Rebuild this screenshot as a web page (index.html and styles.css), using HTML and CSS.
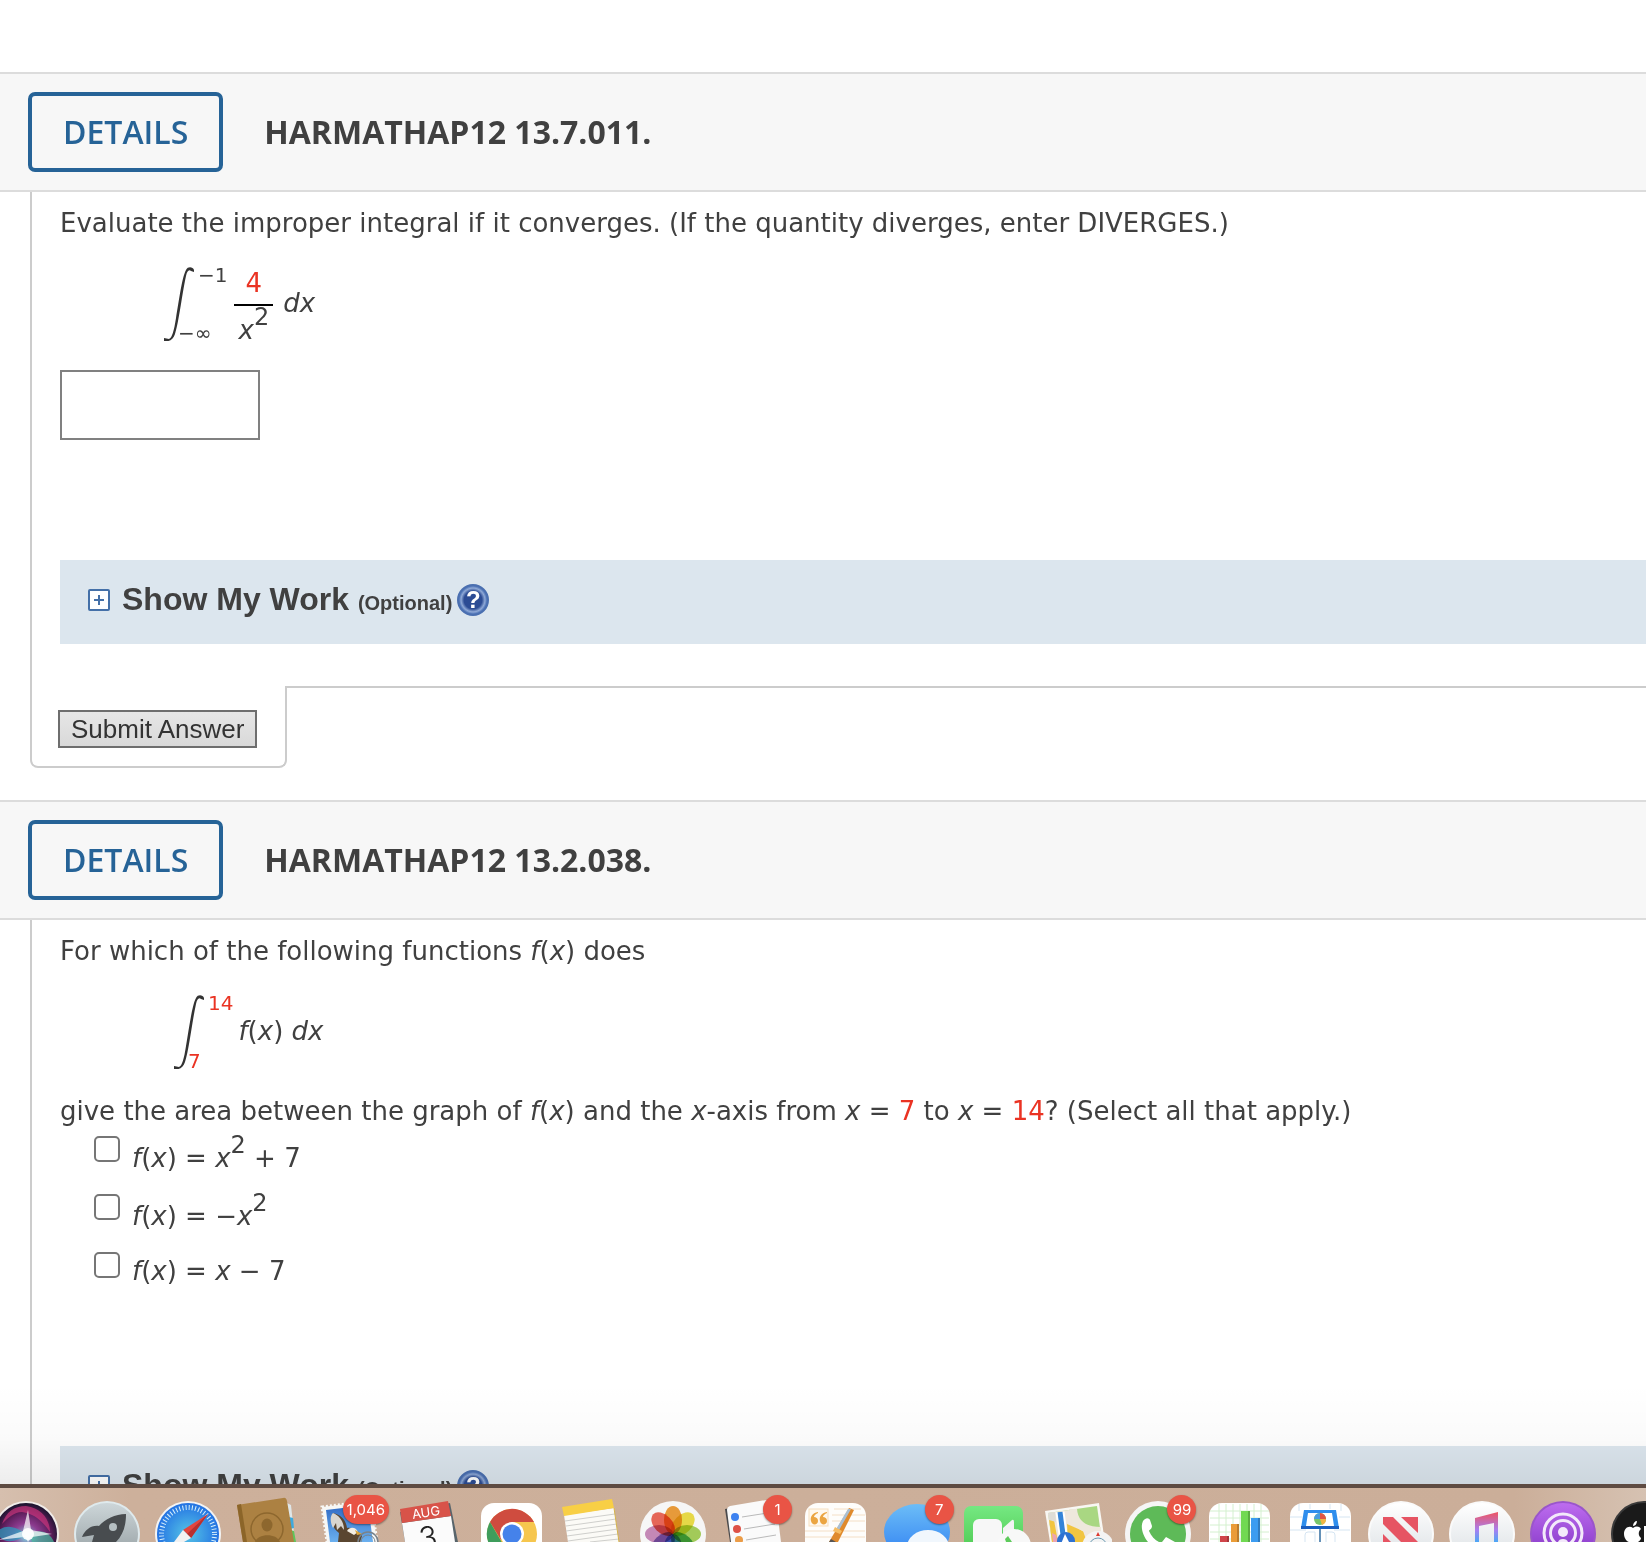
FILE: index.html
```html
<!DOCTYPE html>
<html lang="en">
<head>
    <meta charset="UTF-8">
    <meta name="viewport" content="width=device-width, initial-scale=1.0">
    <title>Homework</title>
    <link rel="stylesheet" href="styles.css">
</head>
<body>
    <main class="page">
        <section class="question">
            <div class="question-header">
                <button class="details-btn" type="button">DETAILS</button>
                <h2>HARMATHAP12 13.7.011.</h2>
            </div>
            <div class="problem">
                <label for="answer">Evaluate the improper integral if it converges. (If the quantity diverges, enter DIVERGES.)</label>
                <div class="equation">
                    <svg class="integral" viewBox="0 0 30 74"><path d="M30 3C29 0 24-1 22 3C18 10 15 34 12 51C10 64 8 71 5 72L0 71V74C5 75 9 73 11 67C15 55 18 27 22 9C23 4 25 2 27 4L30 5Z"/></svg>
                    <div class="limits">
                        <span>−1</span>
                        <span class="lower">−∞</span>
                    </div>
                    <div class="fraction">
                        <span class="red">4</span>
                        <span class="denominator"><i>x</i><sup>2</sup></span>
                    </div>
                    <i class="integrand">dx</i>
                </div>
                <input type="text" id="answer" class="answer">
                <div class="work">
                    <button class="expand-btn" type="button" aria-label="Expand">
                        <svg viewBox="0 0 22 22"><rect x="1" y="1" width="20" height="20" rx="1"/><path d="M6 11H16M11 6V16"/></svg>
                    </button>
                    <h3>Show My Work <small>(Optional)</small></h3>
                    <button class="help-btn" type="button" aria-label="Help"><span>?</span></button>
                </div>
            </div>
            <div class="submit-row">
                <div class="submit-tab">
                    <button class="submit-btn" type="submit">Submit Answer</button>
                </div>
            </div>
        </section>

        <section class="question">
            <div class="question-header">
                <button class="details-btn" type="button">DETAILS</button>
                <h2>HARMATHAP12 13.2.038.</h2>
            </div>
            <div class="problem">
                <p>For which of the following functions <i>f</i>(<i>x</i>) does</p>
                <div class="equation equation-wide">
                    <svg class="integral" viewBox="0 0 30 74"><path d="M30 3C29 0 24-1 22 3C18 10 15 34 12 51C10 64 8 71 5 72L0 71V74C5 75 9 73 11 67C15 55 18 27 22 9C23 4 25 2 27 4L30 5Z"/></svg>
                    <div class="limits red">
                        <span>14</span>
                        <span class="lower">7</span>
                    </div>
                    <span class="integrand"><i>f</i>(<i>x</i>) <i>dx</i></span>
                </div>
                <p>give the area between the graph of <i>f</i>(<i>x</i>) and the <i>x</i>-axis from <i>x</i> = <span class="red">7</span> to <i>x</i> = <span class="red">14</span>? (Select all that apply.)</p>
                <div class="choices">
                    <div class="choice">
                        <input type="checkbox" id="choice1">
                        <label for="choice1"><i>f</i>(<i>x</i>) = <i>x</i><sup>2</sup> + 7</label>
                    </div>
                    <div class="choice">
                        <input type="checkbox" id="choice2">
                        <label for="choice2"><i>f</i>(<i>x</i>) = −<i>x</i><sup>2</sup></label>
                    </div>
                    <div class="choice">
                        <input type="checkbox" id="choice3">
                        <label for="choice3"><i>f</i>(<i>x</i>) = <i>x</i> − 7</label>
                    </div>
                </div>
                <div class="work">
                    <button class="expand-btn" type="button" aria-label="Expand">
                        <svg viewBox="0 0 22 22"><rect x="1" y="1" width="20" height="20" rx="1"/><path d="M6 11H16M11 6V16"/></svg>
                    </button>
                    <h3>Show My Work <small>(Optional)</small></h3>
                    <button class="help-btn" type="button" aria-label="Help"><span>?</span></button>
                </div>
            </div>
        </section>
    </main>

    <footer class="dock">
        <ul>
            <!-- Siri -->
            <li><svg viewBox="0 0 68 54">
                <defs>
                    <radialGradient id="siri" cx=".5" cy=".55" r=".55"><stop offset="0" stop-color="#7fd6e0"/><stop offset=".4" stop-color="#8c3b8f"/><stop offset=".75" stop-color="#5a1c58"/><stop offset="1" stop-color="#17142c"/></radialGradient>
                </defs>
                <circle cx="34" cy="46" r="33" fill="#f1ece9"/><circle cx="34" cy="46" r="31" fill="url(#siri)"/>
                <path d="M34 18C50 20 58 32 58 44C50 32 42 26 30 24C22 24 16 30 10 36C14 24 22 18 34 18Z" fill="#d2377f" opacity=".65"/>
                <path d="M5 44C14 34 26 40 34 46C26 54 10 58 5 44Z" fill="#2b9fc0" opacity=".7"/>
                <path d="M37 46C48 40 58 44 62 54H40Z" fill="#3fc7a0" opacity=".65"/>
                <path d="M36 22L39 42L60 46L40 49L36 54L33 49L6 52L31 43Z" fill="#fff" opacity=".7"/>
                <circle cx="36" cy="46" r="6" fill="#fff" opacity=".9"/>
            </svg></li>
            <!-- Launchpad -->
            <li><svg viewBox="0 0 68 54">
                <defs><linearGradient id="silver" x2="0" y2="1"><stop offset="0" stop-color="#cdd6d9"/><stop offset="1" stop-color="#8f999c"/></linearGradient></defs>
                <circle cx="34" cy="46" r="33" fill="#dfeaed"/><circle cx="34" cy="46" r="31" fill="url(#silver)"/>
                <path d="M53 26C42 26 32 31 26 38C18 37 12 42 9 49L21 47L19 54H43C50 47 53 38 53 26Z" fill="#484c4f"/>
                <circle cx="40" cy="39" r="4" fill="#b5bfc2"/>
            </svg></li>
            <!-- Safari -->
            <li><svg viewBox="0 0 68 54">
                <defs><radialGradient id="compass"><stop offset="0" stop-color="#56c5e6"/><stop offset="1" stop-color="#2473e3"/></radialGradient></defs>
                <circle cx="34" cy="46" r="33" fill="#f4f4f4"/><circle cx="34" cy="46" r="31" fill="url(#compass)"/>
                <circle cx="34" cy="46" r="26.500" fill="none" stroke="#d8f0fc" stroke-width="5" stroke-dasharray="1 2.200"/>
                <path d="M54 26L29 42L37 50Z" fill="#e2453f"/><path d="M54 26L33 46L37 50Z" fill="#b8302f"/>
                <path d="M29 42L37 50L30 54H20Z" fill="#f2f2f2"/>
            </svg></li>
            <!-- Contacts -->
            <li><svg viewBox="0 0 68 54">
                <path d="M50 14L56 17L60 54H52Z" fill="#dfe6e8"/><path d="M54 29L58 30L59 40L55 41Z" fill="#3fa9dc"/><path d="M55 42L59 43L61 54H56Z" fill="#5fc45b"/>
                <path d="M2 17L48 10Q51 9 52 13L59 54H8Z" fill="#ac8142"/><path d="M2 17L6 16L12 54H8Z" fill="#8c6529"/>
                <circle cx="32" cy="41" r="16" fill="none" stroke="#8d672e" stroke-width="1.500"/>
                <ellipse cx="32" cy="37" rx="5.500" ry="6.500" fill="#8d672e"/><path d="M20 54C22 46 41 44 45 54Z" fill="#8d672e"/>
            </svg></li>
            <!-- Mail -->
            <li><svg viewBox="0 0 68 54">
                <defs><linearGradient id="sky" x2="0" y2="1"><stop offset="0" stop-color="#2e69c4"/><stop offset="1" stop-color="#6bb0ef"/></linearGradient></defs>
                <path d="M6 19L55 13L61 54H11Z" fill="#f7f7f5" stroke="#f7f7f5" stroke-width="3" stroke-dasharray="2 2"/>
                <path d="M10 22L52 17L57 54H14Z" fill="url(#sky)"/>
                <path d="M17 25C14 31 16 40 23 45L22 54H44L46 48C42 42 36 39 31 40C30 32 25 27 17 25Z" fill="#5a4630"/>
                <path d="M17 25C13 29 15 36 17 40L20 35L21 42L25 38L28 42C28 34 24 28 17 25Z" fill="#d8d5cf"/>
                <path d="M31 43C34 38 40 39 42 44L38 47Z" fill="#f4efe4"/><path d="M39 42L46 46L41 47Z" fill="#dca63c"/>
                <circle cx="52" cy="54" r="10" fill="none" stroke="#79828a" stroke-width="1.500"/><circle cx="52" cy="54" r="7" fill="none" stroke="#79828a"/>
            </svg><span class="badge">1,046</span></li>
            <!-- Calendar -->
            <li><svg viewBox="0 0 68 54">
                <path d="M4 24L54 15L62 54H9Z" fill="#58646b"/>
                <path d="M6 35L55 28L59 54H9Z" fill="#fbfbfb"/><path d="M4 21L52 13L55 28L6 35Z" fill="#d85349"/>
                <text class="month" x="16" y="29" transform="rotate(-8 30 25)">AUG</text>
                <text class="day" x="23" y="60" transform="rotate(-8 32 50)">3</text>
            </svg></li>
            <!-- Chrome -->
            <li><svg viewBox="0 0 68 54">
                <rect x="4" y="15" width="61" height="60" rx="13" fill="#fff"/>
                <circle cx="35" cy="46" r="25" fill="#f6c64e"/>
                <path d="M13 34A25 25 0 0 1 57 34H35L24 52Z" fill="#cf4c3f"/><path d="M13 34A25 25 0 0 0 13 58H27Z" fill="#3f9d5c"/>
                <circle cx="35" cy="46" r="12" fill="#fff"/><circle cx="35" cy="46" r="9.500" fill="#4582ea"/>
            </svg></li>
            <!-- Notes -->
            <li><svg viewBox="0 0 68 54">
                <path d="M6 27L56 20L61 54H10Z" fill="#fbfaf6"/><path d="M4 19L54 11L56 20L6 28Z" fill="#f8cf45"/>
                <path d="M7 33L57 26M8 38L58 31M8 43L59 36M9 48L60 41M10 53L60 46M32 54L61 51" stroke="#cfcfcc" fill="none"/>
                <path d="M56 20L61 54" stroke="#d6b44a"/>
            </svg></li>
            <!-- Photos -->
            <li><svg viewBox="0 0 68 54">
                <circle cx="34" cy="46" r="33" fill="#f6f6f6"/>
                <g class="petals">
                    <ellipse cx="34" cy="32" rx="9" ry="14" fill="#f0a03c"/>
                    <ellipse cx="34" cy="32" rx="9" ry="14" fill="#efe04a" transform="rotate(45 34 46)"/>
                    <ellipse cx="34" cy="32" rx="9" ry="14" fill="#a8d25c" transform="rotate(90 34 46)"/>
                    <ellipse cx="34" cy="32" rx="9" ry="14" fill="#5cb98c" transform="rotate(135 34 46)"/>
                    <ellipse cx="34" cy="32" rx="9" ry="14" fill="#6c9ddc" transform="rotate(180 34 46)"/>
                    <ellipse cx="34" cy="32" rx="9" ry="14" fill="#8f83cf" transform="rotate(225 34 46)"/>
                    <ellipse cx="34" cy="32" rx="9" ry="14" fill="#cb8dbd" transform="rotate(270 34 46)"/>
                    <ellipse cx="34" cy="32" rx="9" ry="14" fill="#ee6a5b" transform="rotate(315 34 46)"/>
                </g>
            </svg></li>
            <!-- Reminders -->
            <li><svg viewBox="0 0 68 54">
                <path d="M5 21L10 54H60L56 12Z" fill="#4a4a4c"/>
                <path d="M7 22Q7 19 10 18L52 11Q55 11 56 14L61 54H11Z" fill="#fafafa"/>
                <circle cx="15" cy="29" r="4" fill="#3d82f0"/><circle cx="17" cy="41" r="4" fill="#dd5146"/><circle cx="19" cy="52" r="4" fill="#eb9c47"/>
                <path d="M22 29L54 24M24 41L55 36M26 52L56 47" stroke="#b9b9b9" fill="none"/>
            </svg><span class="badge badge-round">1</span></li>
            <!-- Pages -->
            <li><svg viewBox="0 0 68 54">
                <rect x="4" y="15" width="61" height="60" rx="13" fill="#fefdfb"/>
                <path d="M33 21H60M31 27H64M31 33H64M4 43H64M4 49H64" stroke="#f4dfc6" fill="none"/>
                <rect x="8" y="21" width="19" height="17" fill="#fff8ee" stroke="#f6dfc0"/>
                <path d="M17 24C11 25 9 29 10 33C11 38 17 37 17 33C17 30 15 29 13 29C13 27 15 26 17 25ZM26 24C20 25 18 29 19 33C20 38 26 37 26 33C26 30 24 29 22 29C22 27 24 26 26 25Z" fill="#eba542"/>
                <path d="M48 20L53 22L37 54H28Z" fill="#e08a2c"/><path d="M47 21L50 21L37 44L34 43Z" fill="#a9bfd3"/><path d="M34 39L41 43L39 46L32 43Z" fill="#f6bd63"/><path d="M30 51L35 54H28Z" fill="#555"/>
            </svg></li>
            <!-- Messages -->
            <li><svg viewBox="0 0 68 54">
                <defs><linearGradient id="bubble" x2="0" y2="1"><stop offset="0" stop-color="#6cbdf7"/><stop offset="1" stop-color="#2f7ff2"/></linearGradient></defs>
                <ellipse cx="35" cy="44" rx="33" ry="28" fill="url(#bubble)"/><ellipse cx="46" cy="59" rx="21" ry="17" fill="#f1f7fd"/>
            </svg><span class="badge badge-round">7</span></li>
            <!-- FaceTime -->
            <li><svg viewBox="0 0 68 54">
                <defs><linearGradient id="green" x2="0" y2="1"><stop offset="0" stop-color="#75e882"/><stop offset="1" stop-color="#43c142"/></linearGradient></defs>
                <rect x="1" y="18" width="59" height="60" rx="7" fill="url(#green)"/>
                <rect x="10" y="31" width="29" height="32" rx="6" fill="#f7f7f7"/><path d="M40 40L49 32Q51 31 51 34V54H40Z" fill="#f3f3f3"/>
                <circle cx="51" cy="58" r="17" fill="#f8f8f8"/><path d="M42 51L45 48L49 54H43Z" fill="#5ecb5c"/>
            </svg></li>
            <!-- Maps -->
            <li><svg viewBox="0 0 68 54">
                <path d="M1 23L55 15L61 54H6Z" fill="#f8f7f3"/>
                <path d="M4 25L53 18L58 54H8Z" fill="#a9d782"/><path d="M4 25L25 22L50 47L49 54H8Z" fill="#efe7dd"/>
                <path d="M5 31L10 32L14 54H8Z" fill="#f1c541"/><path d="M23 36L39 43L43 54H24Z" fill="#f1c541"/><path d="M4 25L11 24L12 34L5 32Z" fill="#dedcd6"/><path d="M8 45L12 47L14 54H9Z" fill="#eda4b0"/>
                <path d="M29 21C30 36 40 43 57 43" stroke="#eee8dc" stroke-width="8" fill="none"/><path d="M16 24L20 54" stroke="#fff" stroke-width="9"/><path d="M16 24L20 54" stroke="#3584d8" stroke-width="5"/>
                <circle cx="22" cy="53" r="9" fill="#2e72d2"/><path d="M21 46L26 56L21 54L17 56Z" fill="#fff"/>
                <circle cx="54" cy="59" r="16" fill="#f4f4f4"/><circle cx="54" cy="59" r="9" fill="none" stroke="#6a9ab3"/><path d="M54 44L56 48H52Z" fill="#dd3b30"/>
            </svg></li>
            <!-- WhatsApp -->
            <li><svg viewBox="0 0 68 54">
                <circle cx="34" cy="46" r="33" fill="#f5f5f5"/><circle cx="34" cy="46" r="28" fill="#5eba58"/>
                <path d="M19 33C22 29 25 30 26 32L28 38C28 41 25 42 25 43C27 48 31 52 35 54H24C19 48 16 39 19 33Z" fill="#fff"/><path d="M38 54L42 49L51 54Z" fill="#fff"/>
            </svg><span class="badge badge-round">99</span></li>
            <!-- Numbers -->
            <li><svg viewBox="0 0 68 54">
                <rect x="4" y="15" width="61" height="60" rx="13" fill="#fff"/>
                <path d="M5 23H64M5 30H64M5 37H64M5 44H64M5 51H64M14 16V54M21 16V54M28 16V54M35 16V54M42 16V54M49 16V54M56 16V54" stroke="#d4f0cf" fill="none"/>
                <rect x="15" y="48" width="9" height="6" fill="#d0454a"/><rect x="26" y="36" width="8" height="18" fill="#ea9c37"/><rect x="36" y="23" width="9" height="31" fill="#71d952"/><rect x="46" y="30" width="9" height="24" fill="#3c9cf0"/>
                <path d="M23 48V54M33 36V54M44 23V54M54 30V54" stroke="#0003" stroke-width="2"/>
            </svg></li>
            <!-- Keynote -->
            <li><svg viewBox="0 0 68 54">
                <rect x="4" y="15" width="61" height="60" rx="13" fill="#fff"/>
                <path d="M4 29H16M53 29H64M13 16V23M24 16V21M44 16V21M55 16V23M4 42H20M48 42H64M19 54V47Q19 44 22 44H29V54M40 54V44H46Q49 44 49 47V54" stroke="#d5e5f2" fill="none"/>
                <path d="M18 22H50L53 40H15Z" fill="#2f8eed"/><path d="M15 38H53V41H15Z" fill="#1b5fc0"/><path d="M22 25H46L48 38H20Z" fill="#fff"/>
                <circle cx="34" cy="31" r="6" fill="#79c66b"/><path d="M34 31V25A6 6 0 0 1 40 31Z" fill="#e25545"/><path d="M34 31H40A6 6 0 0 1 36 37Z" fill="#f1b545"/><path d="M34 31V25A6 6 0 0 0 28 31Z" fill="#4a9ee0"/>
                <path d="M34 41V54" stroke="#6491b8" stroke-width="2"/>
            </svg></li>
            <!-- News -->
            <li><svg viewBox="0 0 68 54">
                <defs><linearGradient id="white" x2="0" y2="1"><stop offset="0" stop-color="#fff"/><stop offset="1" stop-color="#d9dee2"/></linearGradient></defs>
                <circle cx="34" cy="46" r="33" fill="#fafafa"/><circle cx="34" cy="46" r="31" fill="url(#white)"/>
                <path d="M16 29H26L51 54H34L16 36ZM34 29H51V45ZM16 46L24 54H16Z" fill="#e65463"/>
            </svg></li>
            <!-- Music -->
            <li><svg viewBox="0 0 68 54">
                <defs><linearGradient id="note" x2="0" y2="1"><stop offset="0" stop-color="#ef5562"/><stop offset=".6" stop-color="#a77ff0"/><stop offset="1" stop-color="#4aa7f5"/></linearGradient></defs>
                <circle cx="34" cy="46" r="33" fill="#fafafa"/><circle cx="34" cy="46" r="31" fill="url(#white)"/>
                <path d="M27 30L50 24V54H46V35L31 38V54H27Z" fill="url(#note)"/>
            </svg></li>
            <!-- Podcasts -->
            <li><svg viewBox="0 0 68 54">
                <defs><linearGradient id="purple" x2="0" y2="1"><stop offset="0" stop-color="#bd6cef"/><stop offset="1" stop-color="#7c2fc0"/></linearGradient></defs>
                <circle cx="34" cy="46" r="33" fill="#9a55cb"/><circle cx="34" cy="46" r="31" fill="url(#purple)"/>
                <circle cx="34" cy="45" r="19" fill="none" stroke="#f3e9fa" stroke-width="3"/><circle cx="34" cy="45" r="12.500" fill="none" stroke="#f3e9fa" stroke-width="3"/>
                <circle cx="34" cy="44" r="5" fill="#f3e9fa"/><path d="M29 54Q30 51 34 51T39 54Z" fill="#f3e9fa"/>
            </svg></li>
            <!-- TV -->
            <li><svg viewBox="0 0 68 54">
                <circle cx="34" cy="46" r="33" fill="#3a3a3a"/><circle cx="34" cy="46" r="31" fill="#1a1a1a"/>
                <path d="M23 40C19 37 14 40 14 46C14 50 17 54 19 54H28C30 53 31 51 31 50C28 48 28 43 31 41C29 38 26 38 23 40ZM23 38C23 35 25 33 27 33C27 36 25 38 23 38Z" fill="#fff"/>
                <path d="M38 38V42H41V45H38V54H34V38Z" fill="#fff"/>
            </svg></li>
        </ul>
    </footer>
</body>
</html>
```

FILE: styles.css
```css
* {
    box-sizing: border-box;
}

body {
    font-family: Verdana, "DejaVu Sans", sans-serif;
    font-size: 26px;
    line-height: 32px;
    color: #404040;
    margin: 0;
    background-color: #fff;
    height: 100vh;
    display: flex;
    flex-direction: column;
    overflow: hidden;
}

p, h2, h3 {
    margin: 0;
}

.red {
    color: #ea3323;
}

.page {
    flex: 1;
    min-height: 0;
    padding-top: 72px;
    overflow: hidden;
    position: relative;
}

/* shadow cast by the dock */
.page::after {
    content: "";
    position: absolute;
    left: 0;
    right: 0;
    bottom: 0;
    height: 100px;
    background: linear-gradient(rgba(0, 0, 0, 0), rgba(0, 0, 0, 0.02) 55%, rgba(0, 0, 0, 0.07));
    pointer-events: none;
}

.question {
    margin-bottom: 32px;
}

.question-header {
    display: flex;
    align-items: center;
    gap: 41px;
    padding: 18px 28px;
    background-color: #f7f7f7;
    border-top: 2px solid #dcdcdc;
    border-bottom: 2px solid #dcdcdc;
    font-family: "Open Sans", sans-serif;
}

.question-header h2 {
    font-size: 32px;
    font-weight: 700;
}

.details-btn {
    font-family: inherit;
    font-size: 32px;
    font-weight: 600;
    line-height: 40px;
    color: #266397;
    background-color: transparent;
    border: 4px solid #266397;
    border-radius: 7px;
    padding: 16px 31px;
    cursor: pointer;
}

.problem {
    margin-left: 30px;
    padding: 15px 0 42px 28px;
    border-left: 2px solid #ccc;
}

.problem > label {
    display: block;
}

.equation {
    display: flex;
    align-items: flex-start;
    margin: 28px 0 24px 104px;
}

.equation-wide {
    margin-left: 114px;
    margin-bottom: 26px;
}

.integral {
    width: 30px;
    height: 74px;
    fill: #333;
}

.limits {
    height: 78px;
    display: flex;
    flex-direction: column;
    justify-content: space-between;
    font-size: 20px;
    line-height: 20px;
    margin: -2px 0;
    padding: 0 5px 0 4px;
}

.lower {
    margin-left: -20px;
}

.fraction {
    margin: 0 10px 0 2px;
    text-align: center;
}

.fraction span {
    display: block;
    padding-bottom: 5px;
}

.fraction .denominator {
    border-top: 2px solid #000;
    padding: 5px 4px 0;
}

.integrand {
    margin-top: 20px;
}

sup {
    font-size: 24px;
    line-height: 12px;
    vertical-align: 14px;
}

.answer {
    display: block;
    width: 200px;
    height: 70px;
    border: 2px solid #808080;
    padding: 4px 8px;
    font: inherit;
}

.work {
    display: flex;
    align-items: center;
    height: 84px;
    margin-top: 120px;
    padding: 0 28px 5px;
    background-color: #dce6ee;
    font-family: Arial, "Liberation Sans", sans-serif;
}

.work h3 {
    font-size: 32px;
    margin: 0 5px 0 12px;
    padding-top: 2px;
}

.work small {
    font-size: 20px;
}

.expand-btn {
    display: flex;
    padding: 0;
    border: none;
    background: none;
    cursor: pointer;
}

.expand-btn svg {
    width: 22px;
    height: 22px;
    fill: #fff;
    stroke: #4470a8;
    stroke-width: 2;
}

.help-btn {
    width: 32px;
    height: 32px;
    padding: 0;
    border: 2px solid #4a6fb0;
    border-radius: 50%;
    background: radial-gradient(#2c4c94 45%, #8fa9d6 60%, #5176b8 70%);
    color: #fff;
    font: bold 24px/28px Arial, "Liberation Sans", sans-serif;
    cursor: pointer;
}

.submit-row {
    display: flex;
    margin-left: 30px;
}

.submit-row::after {
    content: "";
    flex: 1;
    border-top: 2px solid #ccc;
}

.submit-tab {
    padding: 24px 28px 18px 26px;
    border: 2px solid #ccc;
    border-top: none;
    border-radius: 0 0 8px 8px;
}

.submit-btn {
    display: block;
    height: 38px;
    padding: 0 11px;
    font: 26px/32px Arial, "Liberation Sans", sans-serif;
    color: #333;
    background: linear-gradient(#e6e6e6, #d9d9d9);
    border: 2px solid #6e6e6e;
    cursor: pointer;
}

.choices {
    padding: 0 0 25px 34px;
}

.choice {
    display: flex;
    align-items: flex-start;
    gap: 12px;
    height: 58px;
}

.choice input {
    appearance: none;
    width: 26px;
    height: 26px;
    margin: 9px 0 0;
    border: 2px solid #767676;
    border-radius: 5px;
    background-color: #fff;
}

.choice label {
    margin-top: 12px;
}

.dock {
    height: 58px;
    border-top: 4px solid #5e4b42;
    background: linear-gradient(90deg, #d6bfae, #cdb09b 8%, #cbae99 92%, #d6c2b2);
    overflow: hidden;
}

.dock ul {
    display: flex;
    justify-content: space-between;
    list-style: none;
    margin: 0 -32px 0 -8px;
    padding: 0;
}

.dock li {
    position: relative;
}

.dock svg {
    display: block;
    width: 68px;
    height: 54px;
}

.petals ellipse {
    mix-blend-mode: multiply;
}

.month {
    font: 13px Inter, sans-serif;
    fill: #fff;
}

.day {
    font: 300 30px Inter, sans-serif;
    fill: #222;
}

.badge {
    position: absolute;
    top: 7px;
    left: 27px;
    min-width: 29px;
    height: 29px;
    padding: 0 4px;
    border-radius: 15px;
    background-color: #e95445;
    box-shadow: 0 1px 2px rgba(0, 0, 0, 0.4);
    color: #fff;
    font: 15px/29px Inter, sans-serif;
    text-align: center;
}

.badge-round {
    left: 43px;
}
```
